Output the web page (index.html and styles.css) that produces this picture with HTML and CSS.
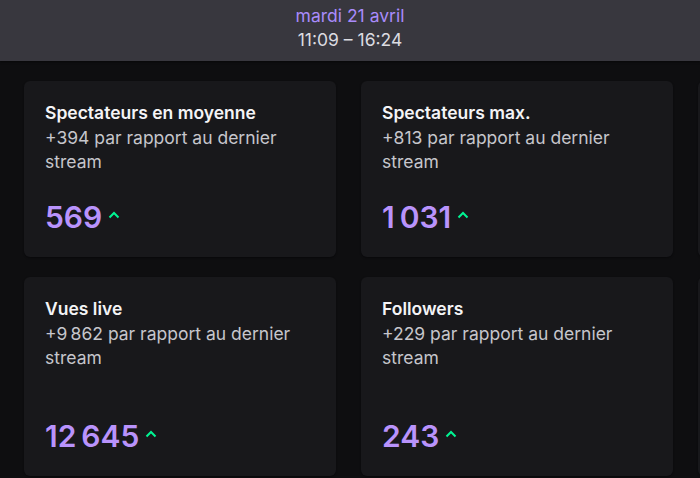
FILE: index.html
```html
<!DOCTYPE html>
<html lang="fr">
<head>
    <meta charset="UTF-8">
    <meta name="viewport" content="width=device-width, initial-scale=1.0">
    <title>Résumé du stream</title>
    <link rel="stylesheet" href="styles.css">
</head>
<body>
    <header class="stream-header">
        <div class="stream-date">mardi 21 avril</div>
        <div class="stream-time">11:09 – 16:24</div>
    </header>

    <main class="stats">
        <div class="stat-card">
            <div class="stat-title">Spectateurs en moyenne</div>
            <div class="stat-desc">+394 par rapport au dernier stream</div>
            <div class="stat-value">
                569
                <svg class="trend-up" width="12" height="8" viewBox="0 0 12 8"><path d="M1.5 6.5 L6 2 L10.5 6.5" fill="none" stroke="currentColor" stroke-width="2"/></svg>
            </div>
        </div>
        <div class="stat-card">
            <div class="stat-title">Spectateurs max.</div>
            <div class="stat-desc">+813 par rapport au dernier stream</div>
            <div class="stat-value">
                1&#8239;031
                <svg class="trend-up" width="12" height="8" viewBox="0 0 12 8"><path d="M1.5 6.5 L6 2 L10.5 6.5" fill="none" stroke="currentColor" stroke-width="2"/></svg>
            </div>
        </div>
        <div class="stat-card"></div>

        <div class="stat-card">
            <div class="stat-title">Vues live</div>
            <div class="stat-desc">+9&#8239;862 par rapport au dernier stream</div>
            <div class="stat-value">
                12&#8239;645
                <svg class="trend-up" width="12" height="8" viewBox="0 0 12 8"><path d="M1.5 6.5 L6 2 L10.5 6.5" fill="none" stroke="currentColor" stroke-width="2"/></svg>
            </div>
        </div>
        <div class="stat-card">
            <div class="stat-title">Followers</div>
            <div class="stat-desc">+229 par rapport au dernier stream</div>
            <div class="stat-value">
                243
                <svg class="trend-up" width="12" height="8" viewBox="0 0 12 8"><path d="M1.5 6.5 L6 2 L10.5 6.5" fill="none" stroke="currentColor" stroke-width="2"/></svg>
            </div>
        </div>
        <div class="stat-card"></div>
    </main>
</body>
</html>
```

FILE: styles.css
```css
body {
    margin: 0;
    background-color: #0e0e10;
    color: #efeff1;
    font-family: Inter, "Noto Sans", sans-serif;
    font-size: 17.5px;
    line-height: 24px;
    overflow: hidden;
}
.stream-header {
    background-color: #38373e;
    text-align: center;
    padding: 4px 0 9px;
    box-shadow: 0 1px 2px rgba(0, 0, 0, 0.5);
}
.stream-date {
    color: #a98bfb;
}
.stream-time {
    color: #dcdce1;
}
.stats {
    display: grid;
    grid-template-columns: repeat(3, 312px);
    grid-template-rows: 176px 199px;
    column-gap: 25px;
    row-gap: 20px;
    padding: 20px 24px;
    overflow: hidden;
}
.stat-card {
    background-color: #18181b;
    border-radius: 6px;
    padding: 20px 21px 22px;
    display: flex;
    flex-direction: column;
    box-shadow: 0 1px 2px rgba(0, 0, 0, 0.4);
}
.stat-title {
    font-weight: 600;
    color: #f4f4f6;
    margin-bottom: 1px;
}
.stat-desc {
    color: #c6c6cc;
}
.stat-value {
    margin-top: auto;
    display: flex;
    align-items: center;
    font-size: 30px;
    line-height: 36px;
    font-weight: 600;
    color: #b993fc;
}
.trend-up {
    color: #00f593;
    margin-left: 6px;
    margin-bottom: 5px;
}
```
